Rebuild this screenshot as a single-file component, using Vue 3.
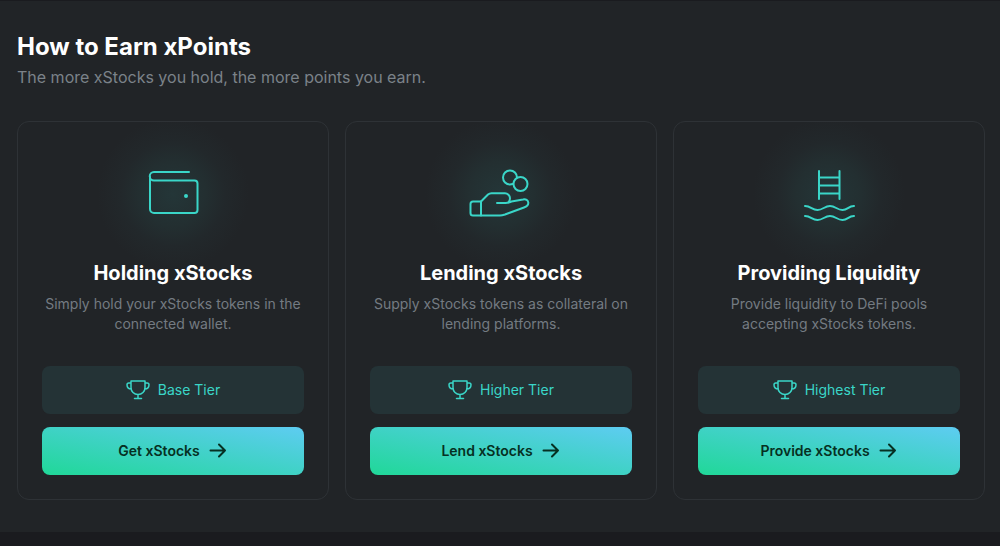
<script setup>
const cards = [
  { icon: 'wallet', title: 'Holding xStocks', text: 'Simply hold your xStocks tokens in the connected wallet.', tier: 'Base Tier', action: 'Get xStocks' },
  { icon: 'hand', title: 'Lending xStocks', text: 'Supply xStocks tokens as collateral on lending platforms.', tier: 'Higher Tier', action: 'Lend xStocks' },
  { icon: 'pool', title: 'Providing Liquidity', text: 'Provide liquidity to DeFi pools accepting xStocks tokens.', tier: 'Highest Tier', action: 'Provide xStocks' },
]
</script>

<template>
  <main class="earn">
    <header class="intro">
      <h1>How to Earn xPoints</h1>
      <p>The more xStocks you hold, the more points you earn.</p>
    </header>
    <div class="cards">
      <article v-for="card in cards" :key="card.icon" class="card">
        <div class="glow">
          <svg class="art" viewBox="0 0 64 64" aria-hidden="true">
            <g v-if="card.icon === 'wallet'">
              <path d="M48 10H13a4 4 0 0 0 0 8.500H53.500a3 3 0 0 1 3 3V48a3 3 0 0 1-3 3H13a4 4 0 0 1-4-4V14.500" />
              <circle class="dot" cx="45" cy="34" r="2" />
            </g>
            <g v-else-if="card.icon === 'hand'">
              <circle cx="41" cy="15.500" r="7" />
              <circle class="coin" cx="51.500" cy="22" r="7" />
              <path d="M12 39.500H4a2.500 2.500 0 0 0-2.500 2.500V51a2.500 2.500 0 0 0 2.500 2.500H31c2 0 3.500-.5 5-1l19-7c3-1 4.500-2.500 4.300-4.800-.2-2.500-2.500-3.800-5.300-3.200L42.500 39.500c-2 .9-4 1.500-6 1.500h-8.500" />
              <path d="M12 53.500V39.500l7-7q1.500-1.300 3.500-1.300h13.500c2.500 0 5 2.500 5 5c0 2-.5 3-1.500 4" />
            </g>
            <g v-else>
              <path d="M22 9v28M42.500 9v28M22 15.500h20.500M22 23.500h20.500M22 31.500h20.500" />
              <path d="M8 44c6 0 7 4 12.500 4s7-4 12.500-4 7 4 12.500 4S51 44 57 44M8 54c6 0 7 4 12.500 4s7-4 12.500-4 7 4 12.500 4S51 54 57 54" />
            </g>
          </svg>
        </div>
        <h2>{{ card.title }}</h2>
        <p class="text">{{ card.text }}</p>
        <div class="tier">
          <svg class="trophy" viewBox="0 0 24 24" aria-hidden="true">
            <path d="M5 4h14v6.500c0 4-3 7-7 7s-7-3-7-7zM5 6H2.800Q1 6 1 7.800C1 10.500 3 12 5.300 12M19 6h2.200Q23 6 23 7.800C23 10.500 21 12 18.700 12M12 17.500V21.500M8.500 21.500h7" />
          </svg>
          <span>{{ card.tier }}</span>
        </div>
        <button type="button" class="action">
          <span>{{ card.action }}</span>
          <svg class="arrow" viewBox="0 0 20 20" aria-hidden="true">
            <path d="M2.500 10.500h14.500M11 4.500l6 6-6 6" />
          </svg>
        </button>
      </article>
    </div>
  </main>
</template>

<style>
body {
  margin: 0;
  background: #1a1b1f;
}
</style>

<style scoped>
.earn {
  box-sizing: border-box;
  margin-top: 1px;
  padding: 32px 15px 32px 17px;
  background: #212427;
  font-family: Inter, sans-serif;
  color: #fff;
}
h1,
h2,
p {
  margin: 0;
}
h1 {
  font-size: 24px;
  line-height: 28px;
  font-weight: 700;
}
.intro p {
  margin-top: 4px;
  font-size: 16px;
  line-height: 24px;
  color: #7b8289;
}
.cards {
  display: grid;
  grid-template-columns: repeat(3, 1fr);
  gap: 16px;
  margin-top: 32px;
}
.card {
  display: flex;
  flex-direction: column;
  padding: 24px;
  border: 1px solid #2e3236;
  border-radius: 12px;
  text-align: center;
  background: radial-gradient(circle at 50% 72px, #243638 0, #232f31 32px, #22282b 52px, #212427 76px);
}
.glow {
  display: flex;
  align-items: center;
  justify-content: center;
  height: 96px;
}
.art {
  width: 64px;
  height: 64px;
}
svg {
  fill: none;
  stroke: #3ad6c8;
  stroke-width: 2;
  stroke-linecap: round;
  stroke-linejoin: round;
}
.dot {
  fill: #3ad6c8;
  stroke: none;
}
.coin {
  fill: #233032;
}
h2 {
  margin-top: 17px;
  font-size: 20px;
  line-height: 28px;
  font-weight: 700;
}
.text {
  margin-top: 7px;
  min-height: 40px;
  font-size: 14px;
  line-height: 20px;
  color: #747b82;
}
.tier,
.action {
  box-sizing: border-box;
  display: flex;
  align-items: center;
  justify-content: center;
  gap: 8px;
  height: 48px;
  padding: 0 16px 2px;
  border-radius: 8px;
  font-size: 14px;
}
.tier {
  margin-top: 32px;
  background: #243336;
  color: #3ad6c8;
}
.trophy {
  width: 24px;
  height: 24px;
  stroke-width: 1.500;
}
.action {
  margin-top: 13px;
  border: 0;
  background: linear-gradient(to top right, #20d898, #5eccf2);
  color: #063022;
  font-family: inherit;
  font-weight: 600;
  cursor: pointer;
}
.arrow {
  width: 20px;
  height: 20px;
  stroke: #063022;
}
</style>
